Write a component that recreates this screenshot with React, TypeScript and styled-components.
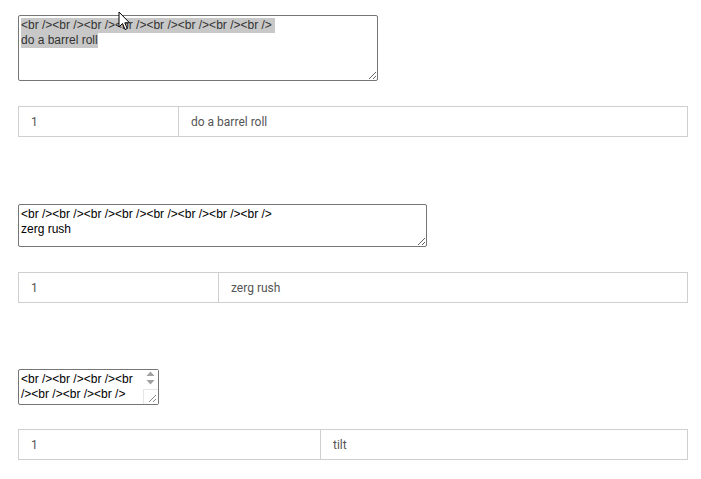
import React, { useEffect, useRef } from "react";
import styled, { createGlobalStyle } from "styled-components";

const Global = createGlobalStyle`
  html, body { margin: 0; padding: 0; background: #fff; }
  body { font-family: Roboto, "Liberation Sans", sans-serif; }
`;

const Page = styled.div`
  position: relative;
  padding: 15px 0 0 18px;
  display: flex;
  flex-direction: column;
  align-items: flex-start;
`;

const Section = styled.section<{ $gapAfter?: number; $gap?: number }>`
  display: flex;
  flex-direction: column;
  align-items: flex-start;
  gap: ${(p) => p.$gap ?? 25}px;
  margin-bottom: ${(p) => p.$gapAfter ?? 0}px;
`;

const Area = styled.textarea<{ $w: number; $h: number; $scroll?: boolean }>`
  box-sizing: border-box;
  display: block;
  width: ${(p) => p.$w}px;
  height: ${(p) => p.$h}px;
  margin: 0;
  padding: 2px ${(p) => (p.$scroll ? 17 : 2)}px 2px 2px;
  border: 1px solid #767676;
  border-radius: 2px;
  font-family: "Liberation Sans", Arial, sans-serif;
  font-size: 12px;
  line-height: 15px;
  color: #000;
  background: #fff;
  outline: none;
  resize: ${(p) => (p.$scroll ? "none" : "both")};
  overflow: hidden;
  &::selection {
    background: #c8c8c8;
    color: #333;
  }
`;

const AreaWrap = styled.div`
  position: relative;
  display: block;
`;

const Gutter = styled.div`
  position: absolute;
  top: 1px;
  right: 1px;
  bottom: 1px;
  width: 15px;
  background: #fff;
  display: flex;
  flex-direction: column;
  justify-content: space-between;
`;

const Arrows = styled.svg`
  display: block;
`;

const Corner = styled.div`
  box-sizing: border-box;
  width: 15px;
  height: 15px;
  border-top: 1px solid #e6e6e6;
  border-left: 1px solid #e6e6e6;
  background: #fff;
  display: flex;
  align-items: flex-end;
  justify-content: flex-end;
`;

const Table = styled.table`
  width: 670px;
  border-collapse: collapse;
  font-family: Roboto, "Liberation Sans", sans-serif;
  font-size: 12px;
  color: #555;
`;

const Cell = styled.td<{ $w?: number }>`
  border: 1px solid #cfcfcf;
  height: 30px;
  padding: 0 12px;
  box-sizing: border-box;
  ${(p) => (p.$w ? `width: ${p.$w}px;` : "")}
`;

const Cursor = styled.svg`
  position: absolute;
  left: 118px;
  top: 11px;
  pointer-events: none;
`;

const brs = "<br /><br /><br /><br /><br /><br /><br /><br />";

function ScrollArea({ w, h, value }: { w: number; h: number; value: string }) {
  return (
    <AreaWrap>
      <Area $w={w} $h={h} $scroll defaultValue={value} />
      <Gutter>
        <Arrows width="15" height="17" viewBox="0 0 15 17">
          <path d="M7.5 1.5 L11.5 6 L3.5 6 Z" fill="#a0a0a0" />
          <path d="M3.5 10 L11.5 10 L7.5 14.5 Z" fill="#a0a0a0" />
        </Arrows>
        <Corner>
          <svg width="14" height="14" viewBox="0 0 14 14">
            <path d="M12 5 L5 12 M12 9 L9 12" stroke="#8a8a8a" strokeWidth="1" />
          </svg>
        </Corner>
      </Gutter>
    </AreaWrap>
  );
}

export default function App() {
  const ref = useRef<HTMLTextAreaElement>(null);
  useEffect(() => {
    const el = ref.current;
    if (el) {
      el.focus();
      el.setSelectionRange(0, el.value.length);
    }
  }, []);
  return (
    <>
      <Global />
      <Page>
        <Section $gapAfter={67}>
          <Area ref={ref} $w={360} $h={66} defaultValue={`${brs}\ndo a barrel roll`} />
          <Table>
            <tbody>
              <tr>
                <Cell $w={160}>1</Cell>
                <Cell>do a barrel roll</Cell>
              </tr>
            </tbody>
          </Table>
        </Section>
        <Section $gapAfter={66}>
          <Area $w={409} $h={43} defaultValue={`${brs}\nzerg rush`} />
          <Table>
            <tbody>
              <tr>
                <Cell $w={200}>1</Cell>
                <Cell>zerg rush</Cell>
              </tr>
            </tbody>
          </Table>
        </Section>
        <Section $gap={24}>
          <ScrollArea w={141} h={36} value={`${brs}\ntilt`} />
          <Table>
            <tbody>
              <tr>
                <Cell $w={302}>1</Cell>
                <Cell>tilt</Cell>
              </tr>
            </tbody>
          </Table>
        </Section>
        <Cursor width="14" height="21" viewBox="0 0 14 21">
          <path
            d="M1 1 L1 16 L4.5 12.5 L7 18.5 L9.3 17.5 L6.8 11.8 L11.5 11.8 Z"
            fill="#fff"
            stroke="#000"
            strokeWidth="1"
            strokeLinejoin="round"
          />
        </Cursor>
      </Page>
    </>
  );
}
